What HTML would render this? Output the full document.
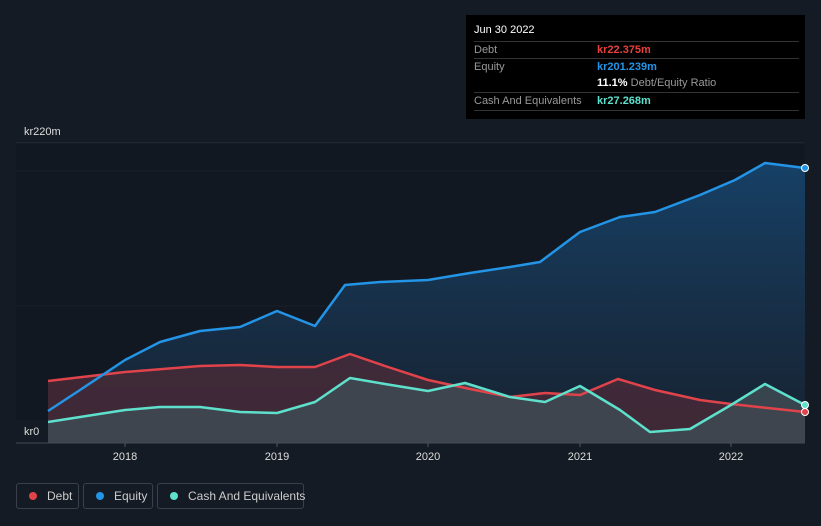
<!DOCTYPE html>
<html><head><style>
body{margin:0;width:821px;height:526px;background:#151b24;font-family:"Liberation Sans",sans-serif;overflow:hidden;position:relative}
.tip{position:absolute;left:466px;top:15px;width:339px;height:104px;background:#000;color:#ddd;font-size:11px}
.row{position:absolute;left:8px;width:325px;border-top:1px solid #333;height:17px;line-height:17px}
.lbl{color:#999}
.v{position:absolute;left:123px}
.leg{position:absolute;top:483px;height:26px;border:1px solid #3a414b;border-radius:3px;color:#ccc;font-size:12px;line-height:24px;box-sizing:border-box;white-space:nowrap}
.dot{display:inline-block;width:8px;height:8px;border-radius:50%;margin:0 10px 0 12px}
</style></head><body>
<svg width="821" height="526" style="position:absolute;left:0;top:0">
<defs>
<linearGradient id="eg" x1="0" y1="0" x2="0" y2="1"><stop offset="0" stop-color="#17456e" stop-opacity=".9"/><stop offset="1" stop-color="#1a2a3c" stop-opacity=".6"/></linearGradient>
</defs>
<line x1="16" y1="143" x2="805" y2="143" stroke="#2a313b"/>
<line x1="16" y1="171" x2="805" y2="171" stroke="#262d37"/>
<line x1="16" y1="306" x2="805" y2="306" stroke="#262d37"/>
<rect x="16" y="143" width="789" height="300" fill="#111720" opacity=".6"/>
<path d="M48,411 L80,390 L125,360 L160,342 L200,331 L240,327 L277,311 L315,326 L345,285 L380,282 L428,280 L470,273 L510,267 L540,262 L580,232 L620,217 L655,212 L700,195 L735,180 L765,163 L805,168 L805,443 L48,443Z" fill="url(#eg)"/>
<path d="M48,381 L125,372 L200,366 L240,365 L277,367 L315,367 L350,354 L385,366 L428,380 L470,389 L510,397 L545,393 L580,395 L618,379 L655,390 L700,400 L731,404 L805,412 L805,443 L48,443Z" fill="#4a2a38" opacity=".8"/>
<path d="M48,422 L80,417 L125,410 L160,407 L200,407 L240,412 L277,413 L315,402 L350,378 L385,384 L428,391 L465,383 L510,397 L545,402 L580,386 L620,410 L650,432 L690,429 L731,405 L765,384 L805,405 L805,443 L48,443Z" fill="#3e4a52" opacity=".85"/>
<g fill="none" stroke-width="2.5" stroke-linejoin="round">
<path d="M48,381 L125,372 L200,366 L240,365 L277,367 L315,367 L350,354 L385,366 L428,380 L470,389 L510,397 L545,393 L580,395 L618,379 L655,390 L700,400 L731,404 L805,412" stroke="#e0434a"/>
<path d="M48,422 L80,417 L125,410 L160,407 L200,407 L240,412 L277,413 L315,402 L350,378 L385,384 L428,391 L465,383 L510,397 L545,402 L580,386 L620,410 L650,432 L690,429 L731,405 L765,384 L805,405" stroke="#5ee0cc"/>
<path d="M48,411 L80,390 L125,360 L160,342 L200,331 L240,327 L277,311 L315,326 L345,285 L380,282 L428,280 L470,273 L510,267 L540,262 L580,232 L620,217 L655,212 L700,195 L735,180 L765,163 L805,168" stroke="#2394e6"/>
</g>
<circle cx="805" cy="168" r="3.5" fill="#2394e6" stroke="#fff" stroke-width="1"/>
<circle cx="805" cy="412" r="3.5" fill="#e0434a" stroke="#fff" stroke-width="1"/>
<circle cx="805" cy="405" r="3.5" fill="#5ee0cc" stroke="#fff" stroke-width="1"/>
<rect x="16" y="420" width="32" height="23" fill="#151b24"/>
<line x1="16" y1="443" x2="805" y2="443" stroke="#444b55"/>
<g stroke="#555"><line x1="125" y1="443" x2="125" y2="447"/><line x1="277" y1="443" x2="277" y2="447"/><line x1="428" y1="443" x2="428" y2="447"/><line x1="580" y1="443" x2="580" y2="447"/><line x1="731" y1="443" x2="731" y2="447"/></g>
<g fill="#ddd" font-size="11" font-family="Liberation Sans" text-anchor="middle">
<text x="125" y="460">2018</text><text x="277" y="460">2019</text><text x="428" y="460">2020</text><text x="580" y="460">2021</text><text x="731" y="460">2022</text>
</g>
<text x="24" y="135" fill="#ddd" font-size="11" font-family="Liberation Sans">kr220m</text>
<text x="24" y="435" fill="#ddd" font-size="11" font-family="Liberation Sans">kr0</text>
</svg>
<div class="tip">
<div style="position:absolute;left:8px;top:9px;color:#fff;font-size:11px">Jun 30 2022</div>
<div class="row" style="top:26px"><span class="lbl">Debt</span><span class="v" style="color:#e8403f;font-weight:bold">kr22.375m</span></div>
<div class="row" style="top:43px"><span class="lbl">Equity</span><span class="v" style="color:#2394e6;font-weight:bold">kr201.239m</span></div>
<div class="row" style="top:60px;border-top:none"><span class="v" style="color:#fff"><b>11.1%</b> <span class="lbl">Debt/Equity Ratio</span></span></div>
<div class="row" style="top:77px"><span class="lbl">Cash And Equivalents</span><span class="v" style="color:#5ee0cc;font-weight:bold">kr27.268m</span></div>
<div class="row" style="top:95px;height:0"></div>
</div>
<div class="leg" style="left:16px;width:63px"><span class="dot" style="background:#e0434a"></span>Debt</div>
<div class="leg" style="left:83px;width:70px"><span class="dot" style="background:#2394e6"></span>Equity</div>
<div class="leg" style="left:157px;width:147px"><span class="dot" style="background:#5ee0cc"></span>Cash And Equivalents</div>
</body></html>
